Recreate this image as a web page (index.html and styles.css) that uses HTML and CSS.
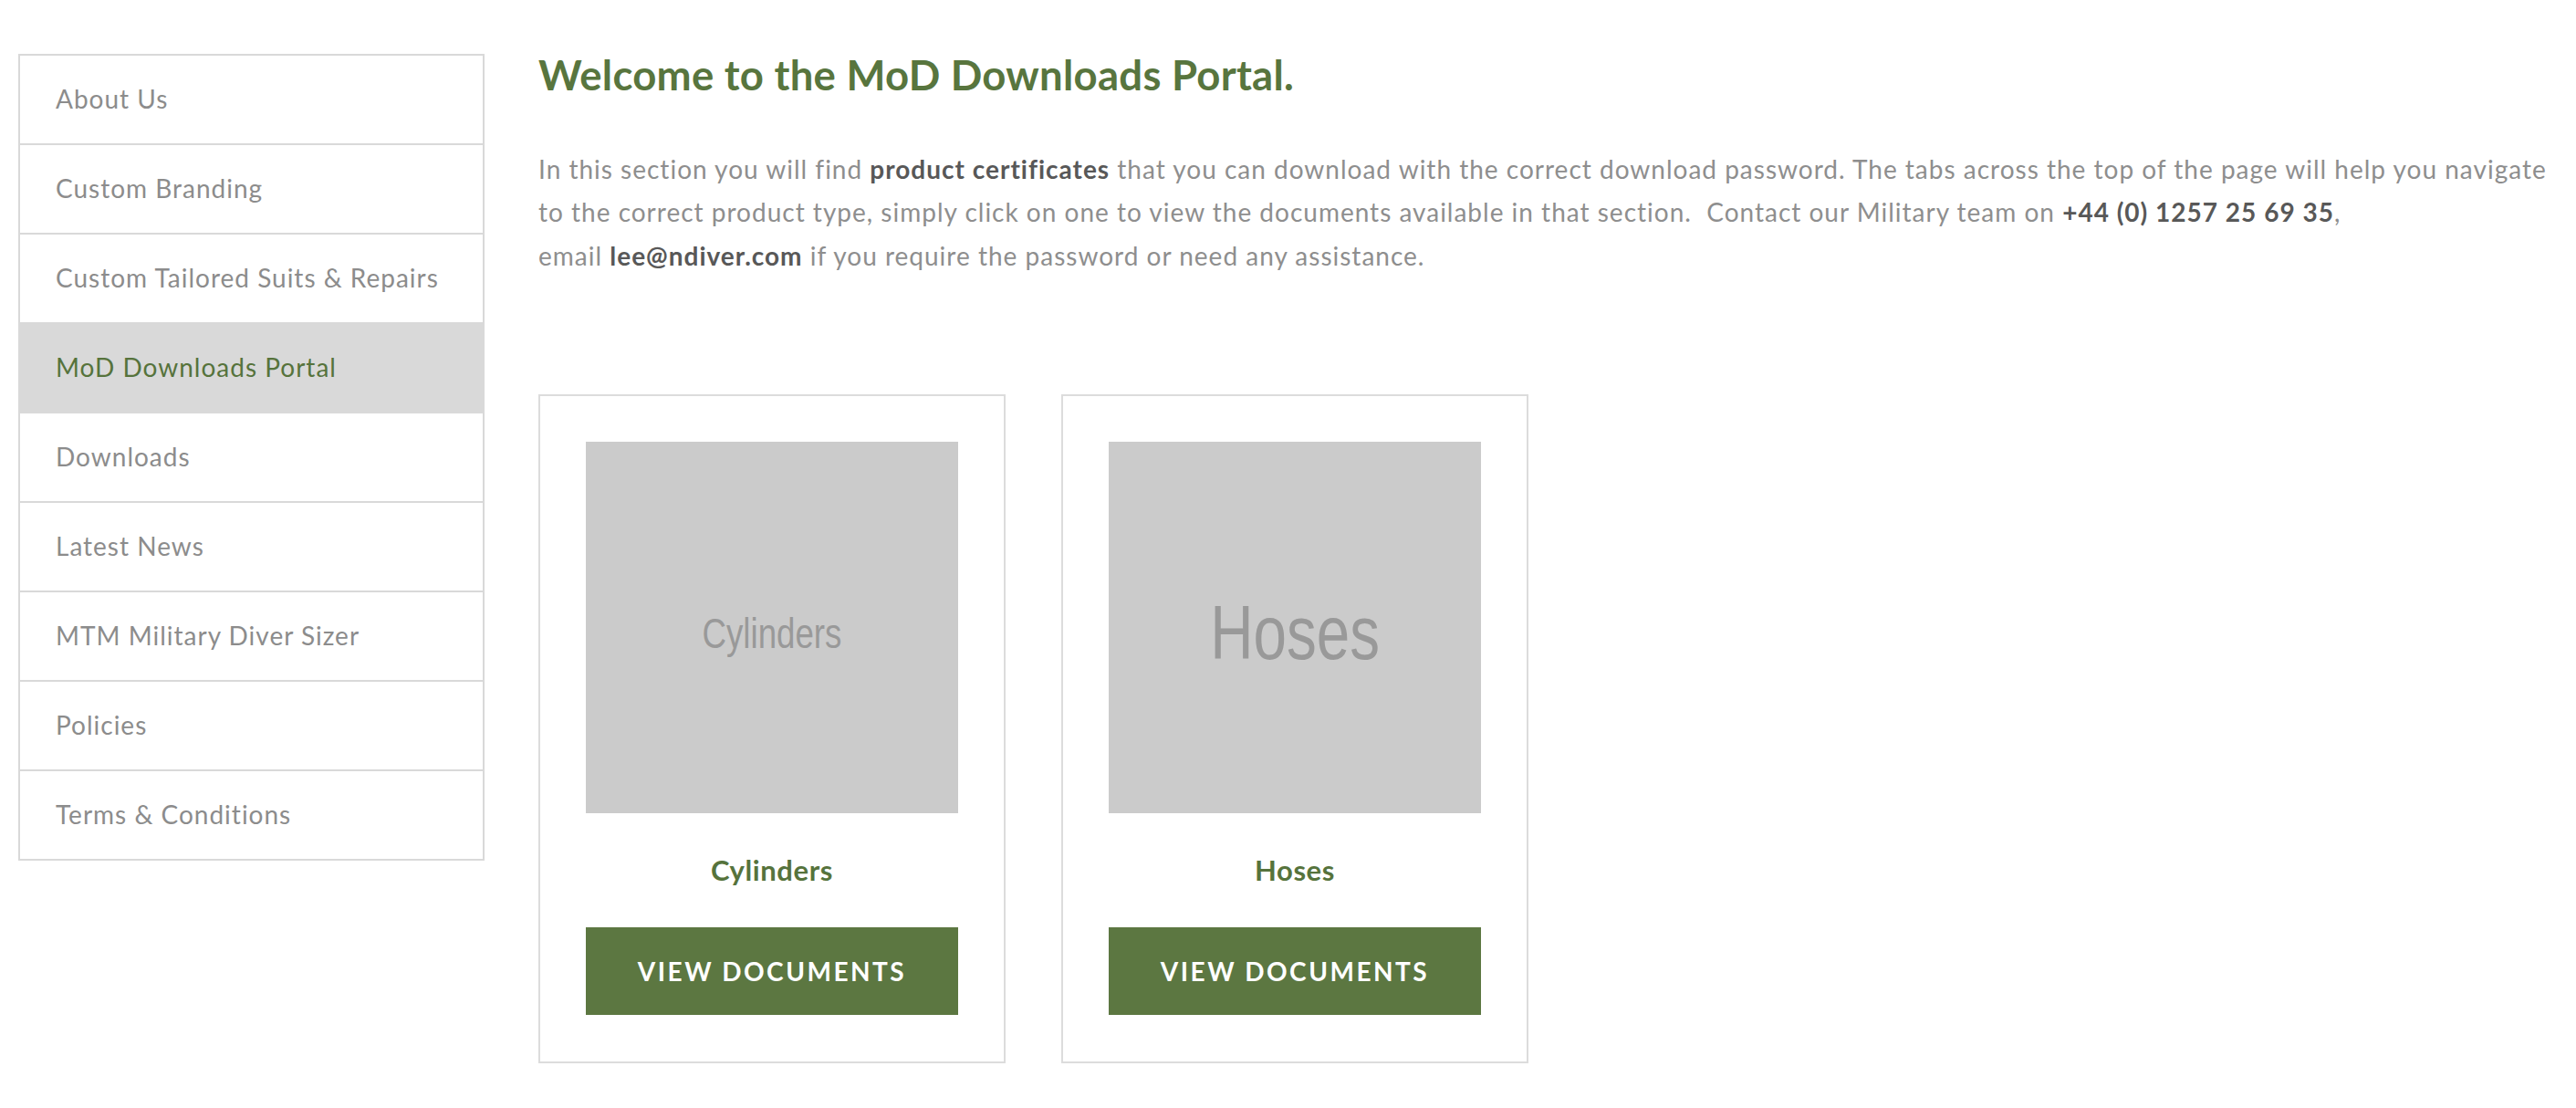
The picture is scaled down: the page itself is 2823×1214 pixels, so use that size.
FILE: index.html
```html
<!DOCTYPE html>
<html lang="en">
<head>
<meta charset="utf-8">
<title>MoD Downloads Portal</title>
<link rel="stylesheet" href="styles.css">
</head>
<body>
<div class="page">
  <nav class="sidebar">
    <ul class="menu">
      <li class="menu-item">About Us</li>
      <li class="menu-item">Custom Branding</li>
      <li class="menu-item">Custom Tailored Suits &amp; Repairs</li>
      <li class="menu-item active">MoD Downloads Portal</li>
      <li class="menu-item">Downloads</li>
      <li class="menu-item">Latest News</li>
      <li class="menu-item">MTM Military Diver Sizer</li>
      <li class="menu-item">Policies</li>
      <li class="menu-item">Terms &amp; Conditions</li>
    </ul>
  </nav>
  <main class="content">
    <h1 class="title">Welcome to the MoD Downloads Portal.</h1>
    <p class="intro">In this section you will find <b>product certificates</b> that you can download with the correct download password. The tabs across the top of the page will help you navigate to the correct product type, simply click on one to view the documents available in that section.&nbsp; Contact our Military team on <b>+44 (0) 1257 25 69 35</b>,<br>email <b>lee@ndiver.com</b> if you require the password or need any assistance.</p>
    <div class="cards">
      <div class="card">
        <div class="thumb"><span class="thumb-label thumb-label-sm">Cylinders</span></div>
        <h3 class="card-title">Cylinders</h3>
        <a class="btn">View Documents</a>
      </div>
      <div class="card">
        <div class="thumb"><span class="thumb-label thumb-label-lg">Hoses</span></div>
        <h3 class="card-title">Hoses</h3>
        <a class="btn">View Documents</a>
      </div>
    </div>
  </main>
</div>
</body>
</html>
```

FILE: styles.css
```css
* { box-sizing: border-box; }
html, body { margin: 0; padding: 0; background: #fff; }
body { font-family: Lato, "Open Sans", Arial, sans-serif; }

.page {
  display: flex;
  align-items: flex-start;
  gap: 59px;
  padding: 55px 20px 0 20px;
}

.sidebar {
  flex: none;
  width: 511px;
  margin-top: 4px;
}

.menu {
  list-style: none;
  margin: 0;
  padding: 0;
  border: 2px solid #d9d9d9;
}

.menu-item {
  height: 98px;
  border-top: 2px solid #d9d9d9;
  display: flex;
  align-items: center;
  padding-left: 39px;
  padding-bottom: 2px;
  font-size: 28px;
  letter-spacing: 1px;
  color: #8c8c8c;
}
.menu-item:first-child { border-top: none; height: 96px; }
.menu-item.active { background: #d9d9d9; color: #56733c; }

.content {
  flex: 1;
  min-width: 0;
}

.title {
  margin: 0;
  font-size: 45.5px;
  line-height: 1.2;
  font-weight: 700;
  letter-spacing: 0.25px;
  color: #58753e;
}

.intro {
  margin: 52px 0 0;
  font-size: 28px;
  line-height: 47.5px;
  letter-spacing: 1px;
  color: #8e8e8e;
}
.intro b { color: #585858; font-weight: 700; }

.cards {
  display: flex;
  gap: 61px;
  margin-top: 128px;
}

.card {
  width: 512px;
  border: 2px solid #dcdcdc;
  padding: 50px 50px 51px;
  display: flex;
  flex-direction: column;
}

.thumb {
  height: 407px;
  background: #cbcbcb;
  display: flex;
  align-items: center;
  justify-content: center;
  padding-top: 12px;
  overflow: hidden;
}
.thumb-label {
  font-family: "Liberation Sans", Arial, sans-serif;
  color: #999999;
  transform: scaleX(0.78);
  white-space: nowrap;
  line-height: 1.1;
}
.thumb-label-sm { font-size: 47px; }
.thumb-label-lg { font-size: 84px; }

.card-title {
  margin: 44px 0 44px;
  text-align: center;
  font-size: 31px;
  line-height: 1.2;
  font-weight: 700;
  letter-spacing: 0.6px;
  color: #56733c;
}

.btn {
  height: 96px;
  display: flex;
  align-items: center;
  justify-content: center;
  background: #5c7741;
  color: #ffffff;
  font-size: 28px;
  font-weight: 700;
  letter-spacing: 2.5px;
  text-transform: uppercase;
}
```
